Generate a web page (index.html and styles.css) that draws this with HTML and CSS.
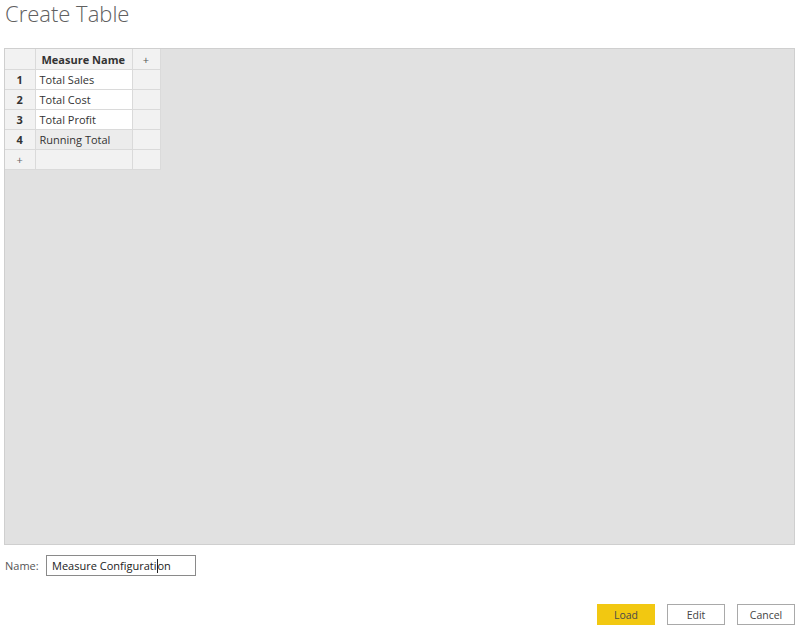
FILE: index.html
```html
<!DOCTYPE html>
<html lang="en">
<head>
<meta charset="utf-8">
<title>Create Table</title>
<link rel="stylesheet" href="styles.css">
</head>
<body>
<div class="dialog">
  <h1 class="title">Create Table</h1>

  <div class="canvas">
    <table class="grid">
      <thead>
        <tr>
          <th class="corner"></th>
          <th class="col-head">Measure Name</th>
          <th class="add-col">+</th>
        </tr>
      </thead>
      <tbody>
        <tr>
          <td class="row-num">1</td>
          <td class="cell">Total Sales</td>
          <td class="spare"></td>
        </tr>
        <tr>
          <td class="row-num">2</td>
          <td class="cell">Total Cost</td>
          <td class="spare"></td>
        </tr>
        <tr>
          <td class="row-num">3</td>
          <td class="cell">Total Profit</td>
          <td class="spare"></td>
        </tr>
        <tr class="active">
          <td class="row-num">4</td>
          <td class="cell">Running Total</td>
          <td class="spare"></td>
        </tr>
        <tr class="add-row">
          <td class="row-num plus">+</td>
          <td class="cell"></td>
          <td class="spare"></td>
        </tr>
      </tbody>
    </table>
  </div>

  <div class="name-row">
    <label class="name-label" for="table-name">Name:</label>
    <div class="name-input" id="table-name">Measure Configurati<span class="caret"></span>on</div>
  </div>

  <div class="actions">
    <button class="btn primary">Load</button>
    <button class="btn">Edit</button>
    <button class="btn">Cancel</button>
  </div>
</div>
</body>
</html>
```

FILE: styles.css
```css
* {
  box-sizing: border-box;
}

html, body {
  margin: 0;
  padding: 0;
  background: #ffffff;
}

body {
  font-family: "Open Sans", "Noto Sans", "Liberation Sans", sans-serif;
  color: #333333;
}

.dialog {
  width: 800px;
  height: 628px;
  display: flex;
  flex-direction: column;
}

.title {
  margin: 0;
  height: 48px;
  padding: 0 0 0 5px;
  font-size: 22px;
  font-weight: 300;
  line-height: 26px;
  color: #606060;
}

.canvas {
  margin-left: 4px;
  width: 791px;
  height: 497px;
  background: #e1e1e1;
  border: 1px solid #cfcfcf;
}

.grid {
  border-collapse: collapse;
  font-size: 11px;
  color: #333333;
}

.grid th,
.grid td {
  height: 20px;
  padding: 1px 0 0 0;
  border: 1px solid #dadada;
}

.grid tr:first-child th {
  border-top: none;
}

.grid tr th:first-child,
.grid tr td:first-child {
  border-left: none;
}

.corner {
  width: 30px;
  background: #f2f2f2;
}

.col-head {
  width: 97px;
  background: #f2f2f2;
  font-weight: 700;
  text-align: left;
  padding-left: 6px !important;
}

.add-col {
  width: 28px;
  background: #f2f2f2;
  font-weight: 400;
  font-size: 11px;
  color: #555555;
}

.row-num {
  text-align: center;
  background: #f2f2f2;
  font-weight: 700;
}

.row-num.plus {
  font-weight: 400;
  color: #666666;
}

.cell {
  background: #ffffff;
  padding-left: 4px !important;
}

.spare {
  background: #f2f2f2;
}

.active .cell {
  background: #ececec;
}

.add-row .cell {
  background: #f2f2f2;
}

.name-row {
  display: flex;
  align-items: center;
  margin-top: 10px;
  padding-left: 5px;
  height: 21px;
}

.name-label {
  width: 41px;
  font-size: 11px;
  color: #555555;
}

.name-input {
  width: 150px;
  height: 21px;
  border: 1px solid #8a8a8a;
  font-size: 11px;
  line-height: 19px;
  padding-left: 5px;
  color: #222222;
  white-space: nowrap;
}

.caret {
  display: inline-block;
  width: 1px;
  height: 14px;
  background: #222222;
  vertical-align: -3px;
}

.actions {
  display: flex;
  justify-content: flex-end;
  gap: 12px;
  margin-top: 28px;
  padding-right: 5px;
}

.btn {
  width: 58px;
  height: 21px;
  font-family: inherit;
  font-size: 10.5px;
  color: #444444;
  background: #ffffff;
  border: 1px solid #a9a9a9;
  padding: 0;
}

.btn.primary {
  background: #f2c811;
  border-color: #f2c811;
  color: #4a4a4a;
}
```
